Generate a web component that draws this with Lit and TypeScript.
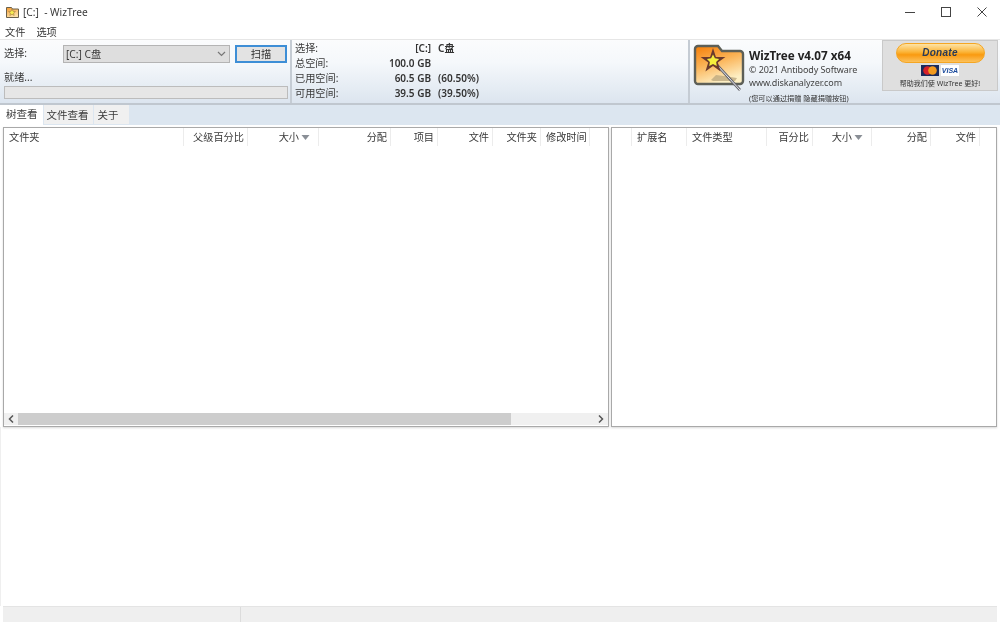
import { LitElement, html, css, svg } from "lit";
import { customElement } from "lit/decorators.js";

const arrow = html`<svg class="sort" width="9" height="5" viewBox="0 0 9 5"><path d="M.5 0h8L4.500 5z" fill="#8a8f96"/></svg>`;

const logo = svg`<svg width="54" height="54" viewBox="0 0 54 54">
  <defs>
    <linearGradient id="fold" x1="0" y1="0" x2="0.4" y2="1">
      <stop offset="0" stop-color="#f77d06"/><stop offset="0.5" stop-color="#fbb356"/><stop offset="1" stop-color="#fdefc4"/>
    </linearGradient>
  </defs>
  <path d="M2 6a3 3 0 0 1 3-3h20l4 5h18a3 3 0 0 1 3 3v27a3 3 0 0 1-3 3H5a3 3 0 0 1-3-3z" fill="url(#fold)" stroke="#5d5f57" stroke-width="2.400"/>
  <path d="M18 37l5-5 8 1 13 2-2 3H20z" fill="#b9a67c" opacity=".75"/>
  <path d="M24 22L47 47" stroke="#65656c" stroke-width="2.600"/>
  <path d="M24 22L47 47" stroke="#e8e8ee" stroke-width="1"/>
  <path d="M20 5l2.900 9h9.500l-7.600 5.500 2.800 9L20 23l-7.600 5.500 2.800-9L7.600 14h9.500z" fill="#6b3a2c"/>
  <path d="M20 11.500l1.900 3.800 4.200.6-3 3 .7 4.200-3.800-2-3.800 2 .7-4.200-3-3 4.200-.6z" fill="#f5ef3c"/>
</svg>`;

@customElement("app-root")
export class AppRoot extends LitElement {
  static styles = css`
    :host {
      display: flex;
      flex-direction: column;
      width: 1000px;
      height: 624px;
      overflow: hidden;
      background: #fff;
      color: #3a3a3a;
      font: 10.2px/14px "Noto Sans", "Noto Sans CJK SC", sans-serif;
      filter: blur(0.35px);
    }
    .title {
      display: flex;
      align-items: center;
      height: 23px;
      padding-left: 6px;
      gap: 4px;
      flex: none;
    }
    .title .name { flex: 1; white-space: pre; padding-top: 1px; }
    .winbtns { display: flex; }
    .winbtn {
      width: 36px;
      height: 23px;
      display: flex;
      align-items: center;
      justify-content: center;
    }
    .menu {
      display: flex;
      gap: 11px;
      height: 16px;
      padding-left: 5px;
      align-items: center;
      flex: none;
      color: #333;
      padding-top: 1px;
      box-sizing: border-box;
    }
    .toolbar {
      display: flex;
      height: 66px;
      flex: none;
      box-sizing: border-box;
      background: linear-gradient(#fbfcfd, #f5f8fb 35%, #dce5ef);
      border-top: 1px solid #e6e6e6;
      border-bottom: 2px solid #c0c7cf;
    }
    .sec-left {
      width: 292px;
      box-sizing: border-box;
      padding: 5px 2px 0 4px;
      flex: none;
      border-right: 2px solid #c5ccd4;
    }
    .row { display: flex; align-items: center; }
    .row .lbl { width: 59px; padding-bottom: 3px; }
    .select {
      width: 167px;
      height: 18px;
      box-sizing: border-box;
      background: #dedede;
      border: 1px solid #b4b4b4;
      display: flex;
      align-items: center;
      justify-content: space-between;
      padding: 0 3px 0 2px;
    }
    .scan {
      width: 52px;
      height: 18px;
      margin-left: 5px;
      box-sizing: border-box;
      border: 2px solid #3d8ed6;
      background: #e3e3e3;
      display: flex;
      align-items: center;
      justify-content: center;
      color: #333;
    }
    .ready { margin-top: 7px; height: 15px; line-height: 15px; }
    .progress {
      width: 284px;
      height: 13px;
      box-sizing: border-box;
      background: #e6e6e6;
      border: 1px solid #bcbcbc;
      margin-top: 1px;
    }
    .sec-mid {
      width: 398px;
      box-sizing: border-box;
      flex: none;
      padding: 1px 0 0 3px;
      border-right: 2px solid #c5ccd4;
      display: grid;
      grid-template-columns: 60px 76px 1fr;
      grid-auto-rows: 15px;
      line-height: 15px;
      align-content: start;
    }
    .val { text-align: right; font-weight: 600; color: #333; font-size: 10px; }
    .ext { padding-left: 7px; font-weight: 600; color: #333; font-size: 10px; }
    .sec-logo {
      width: 192px;
      flex: none;
      box-sizing: border-box;
      display: flex;
      padding: 3px 0 0 3px;
      gap: 2px;
    }
    .about { display: flex; flex-direction: column; padding-top: 4px; }
    .app { font: bold 11.700px/16px "Noto Sans", sans-serif; color: #222; white-space: nowrap; }
    .about .small { font-size: 9px; line-height: 13px; letter-spacing: -0.1px; white-space: nowrap; color: #444; }
    .about .note { font-size: 7.200px; line-height: 12px; margin-top: 3px; white-space: nowrap; color: #333; }
    .donate {
      width: 116px;
      height: 51px;
      flex: none;
      box-sizing: border-box;
      background: #dfdfdf;
      border: 1px solid #c9c9c9;
      display: flex;
      flex-direction: column;
      align-items: center;
      padding-top: 2px;
    }
    .pill {
      width: 89px;
      height: 20px;
      box-sizing: border-box;
      border-radius: 10px;
      border: 1px solid #f5a623;
      background: linear-gradient(#fde3a6, #fbb437 45%, #f99a10 60%, #fcc15c);
      display: flex;
      align-items: center;
      justify-content: center;
      font: italic bold 10px/1 "Liberation Sans", sans-serif;
      letter-spacing: 0.3px;
      color: #2b3b57;
    }
    .cards { display: flex; gap: 2px; margin-top: 2px; height: 11px; }
    .mc { width: 18px; height: 11px; background: #1a2a5c; display: flex; align-items: center; justify-content: center; }
    .visa {
      width: 18px;
      height: 11px;
      background: #fff;
      color: #1a4a9c;
      font: italic bold 7px/11px "Liberation Sans", sans-serif;
      text-align: center;
    }
    .help { font-size: 7px; line-height: 12px; margin-top: 2px; color: #333; white-space: nowrap; }
    .tabs {
      display: flex;
      height: 20px;
      flex: none;
      background: #dce6f0;
      box-sizing: border-box;
      font-size: 10.500px;
    }
    .tab {
      height: 19px;
      line-height: 20px;
      padding: 0 4px 0 3px;
      background: #f0f0f0;
      box-sizing: border-box;
      margin-right: 1px;
    }
    .tab.on { background: #fff; height: 20px; padding: 0 5px 0 6px; line-height: 19px; }
    .tab.last { width: 35px; padding-left: 4px; }
    .panes {
      display: flex;
      padding: 2px 3px 0 3px;
      gap: 2px;
      height: 302px;
      box-sizing: border-box;
      flex: none;
    }
    .pane {
      border: 1px solid #a9a9a9;
      box-shadow: 0 1px 2px #d8d8d8;
      box-sizing: border-box;
      background: #fff;
      display: flex;
      flex-direction: column;
      overflow: hidden;
    }
    .pane.a { width: 606px; }
    .pane.b { width: 386px; }
    .head { display: grid; height: 18px; flex: none; }
    .a .head { grid-template-columns: 180px 64px 71px 72px 47px 55px 48px 49px; }
    .b .head { grid-template-columns: 20px 55px 80px 46px 59px 59px 49px; }
    .h {
      border-right: 1px solid #ececec;
      box-sizing: border-box;
      line-height: 18px;
      padding: 0 3px 0 5px;
      text-align: right;
      white-space: nowrap;
    }
    .h.l { text-align: left; }
    .h.s { padding-right: 8px; display: flex; justify-content: flex-end; align-items: center; gap: 2px; }
    .sort { flex: none; }
    .spacer { flex: 1; }
    .hbar { height: 12px; display: flex; align-items: center; background: #f0f0f0; flex: none; margin-bottom: 1px; }
    .hbar .thumb { width: 493px; height: 12px; background: #cdcdcd; flex: none; }
    .hbar .btn { width: 14px; flex: none; display: flex; justify-content: center; }
    .hbar .track { flex: 1; }
    .rest { flex: 1; border-left: 1px solid #efefef; }
    .status {
      display: flex;
      height: 16px;
      margin: 0 3px;
      flex: none;
      background: #efefef;
      border-top: 1px solid #e4e4e4;
      box-sizing: border-box;
    }
    .status .s1 { width: 237px; border-right: 1px solid #dcdcdc; }
    .foot { height: 2px; flex: none; }
  `;

  render() {
    return html`
      <div class="title">
        <svg width="13" height="12" viewBox="0 0 13 12">
          <defs><linearGradient id="tf" x1="0" y1="0" x2="0.4" y2="1"><stop offset="0" stop-color="#f59a2e"/><stop offset="1" stop-color="#fde2a8"/></linearGradient></defs>
          <path d="M.5 1.500h5l1 1.500h6v8.500H.5z" fill="url(#tf)" stroke="#6b604a"/>
          <path d="M6 3l1 2.300 2.400.2-1.800 1.600.6 2.400L6 8.200 3.800 9.500l.6-2.400-1.800-1.600L5 5.300z" fill="#f8ee50" stroke="#7a4a30" stroke-width=".4"/>
        </svg>
        <span class="name">[C:]  - WizTree</span>
        <div class="winbtns">
          <div class="winbtn"><svg width="10" height="10" viewBox="0 0 10 10"><path d="M0 5.500h10" stroke="#444"/></svg></div>
          <div class="winbtn"><svg width="10" height="10" viewBox="0 0 10 10"><rect x=".5" y=".5" width="9" height="9" fill="none" stroke="#444"/></svg></div>
          <div class="winbtn"><svg width="10" height="10" viewBox="0 0 10 10"><path d="M.5.500l9 9M9.500.500l-9 9" stroke="#444"/></svg></div>
        </div>
      </div>
      <div class="menu"><span>文件</span><span>选项</span></div>
      <div class="toolbar">
        <div class="sec-left">
          <div class="row">
            <span class="lbl">选择:</span>
            <div class="select">
              <span>[C:] C盘</span>
              <svg width="9" height="6" viewBox="0 0 9 6"><path d="M1 1l3.500 3.500L8 1" fill="none" stroke="#777" stroke-width="1.200"/></svg>
            </div>
            <div class="scan">扫描</div>
          </div>
          <div class="ready">就绪...</div>
          <div class="progress"></div>
        </div>
        <div class="sec-mid">
          <span>选择:</span><span class="val">[C:]</span><span class="ext">C盘</span>
          <span>总空间:</span><span class="val">100.0 GB</span><span></span>
          <span>已用空间:</span><span class="val">60.5 GB</span><span class="ext">(60.50%)</span>
          <span>可用空间:</span><span class="val">39.5 GB</span><span class="ext">(39.50%)</span>
        </div>
        <div class="sec-logo">
          ${logo}
          <div class="about">
            <div class="app">WizTree v4.07 x64</div>
            <div class="small">© 2021 Antibody Software</div>
            <div class="small">www.diskanalyzer.com</div>
            <div class="note">(您可以通过捐赠 隐藏捐赠按钮)</div>
          </div>
        </div>
        <div class="donate">
          <div class="pill">Donate</div>
          <div class="cards">
            <div class="mc">
              <svg width="16" height="9" viewBox="0 0 16 9"><circle cx="5.500" cy="4.500" r="4.300" fill="#d5202a"/><circle cx="10.500" cy="4.500" r="4.300" fill="#f39a1e"/></svg>
            </div>
            <div class="visa">VISA</div>
          </div>
          <div class="help">帮助我们使 WizTree 更好!</div>
        </div>
      </div>
      <div class="tabs">
        <div class="tab on">树查看</div>
        <div class="tab">文件查看</div>
        <div class="tab last">关于</div>
      </div>
      <div class="panes">
        <div class="pane a">
          <div class="head">
            <div class="h l">文件夹</div>
            <div class="h">父级百分比</div>
            <div class="h s">大小${arrow}</div>
            <div class="h">分配</div>
            <div class="h">项目</div>
            <div class="h">文件</div>
            <div class="h">文件夹</div>
            <div class="h l">修改时间</div>
          </div>
          <div class="spacer"></div>
          <div class="hbar">
            <div class="btn"><svg width="6" height="8" viewBox="0 0 6 8"><path d="M5 .5L1.500 4 5 7.500" fill="none" stroke="#555" stroke-width="1.500"/></svg></div>
            <div class="thumb"></div>
            <div class="track"></div>
            <div class="btn"><svg width="6" height="8" viewBox="0 0 6 8"><path d="M1 .5L4.500 4 1 7.500" fill="none" stroke="#555" stroke-width="1.500"/></svg></div>
          </div>
        </div>
        <div class="pane b">
          <div class="head">
            <div class="h"></div>
            <div class="h l">扩展名</div>
            <div class="h l">文件类型</div>
            <div class="h">百分比</div>
            <div class="h s">大小${arrow}</div>
            <div class="h">分配</div>
            <div class="h">文件</div>
          </div>
          <div class="spacer"></div>
        </div>
      </div>
      <div class="rest"></div>
      <div class="status"><div class="s1"></div><div></div></div>
      <div class="foot"></div>
    `;
  }
}
